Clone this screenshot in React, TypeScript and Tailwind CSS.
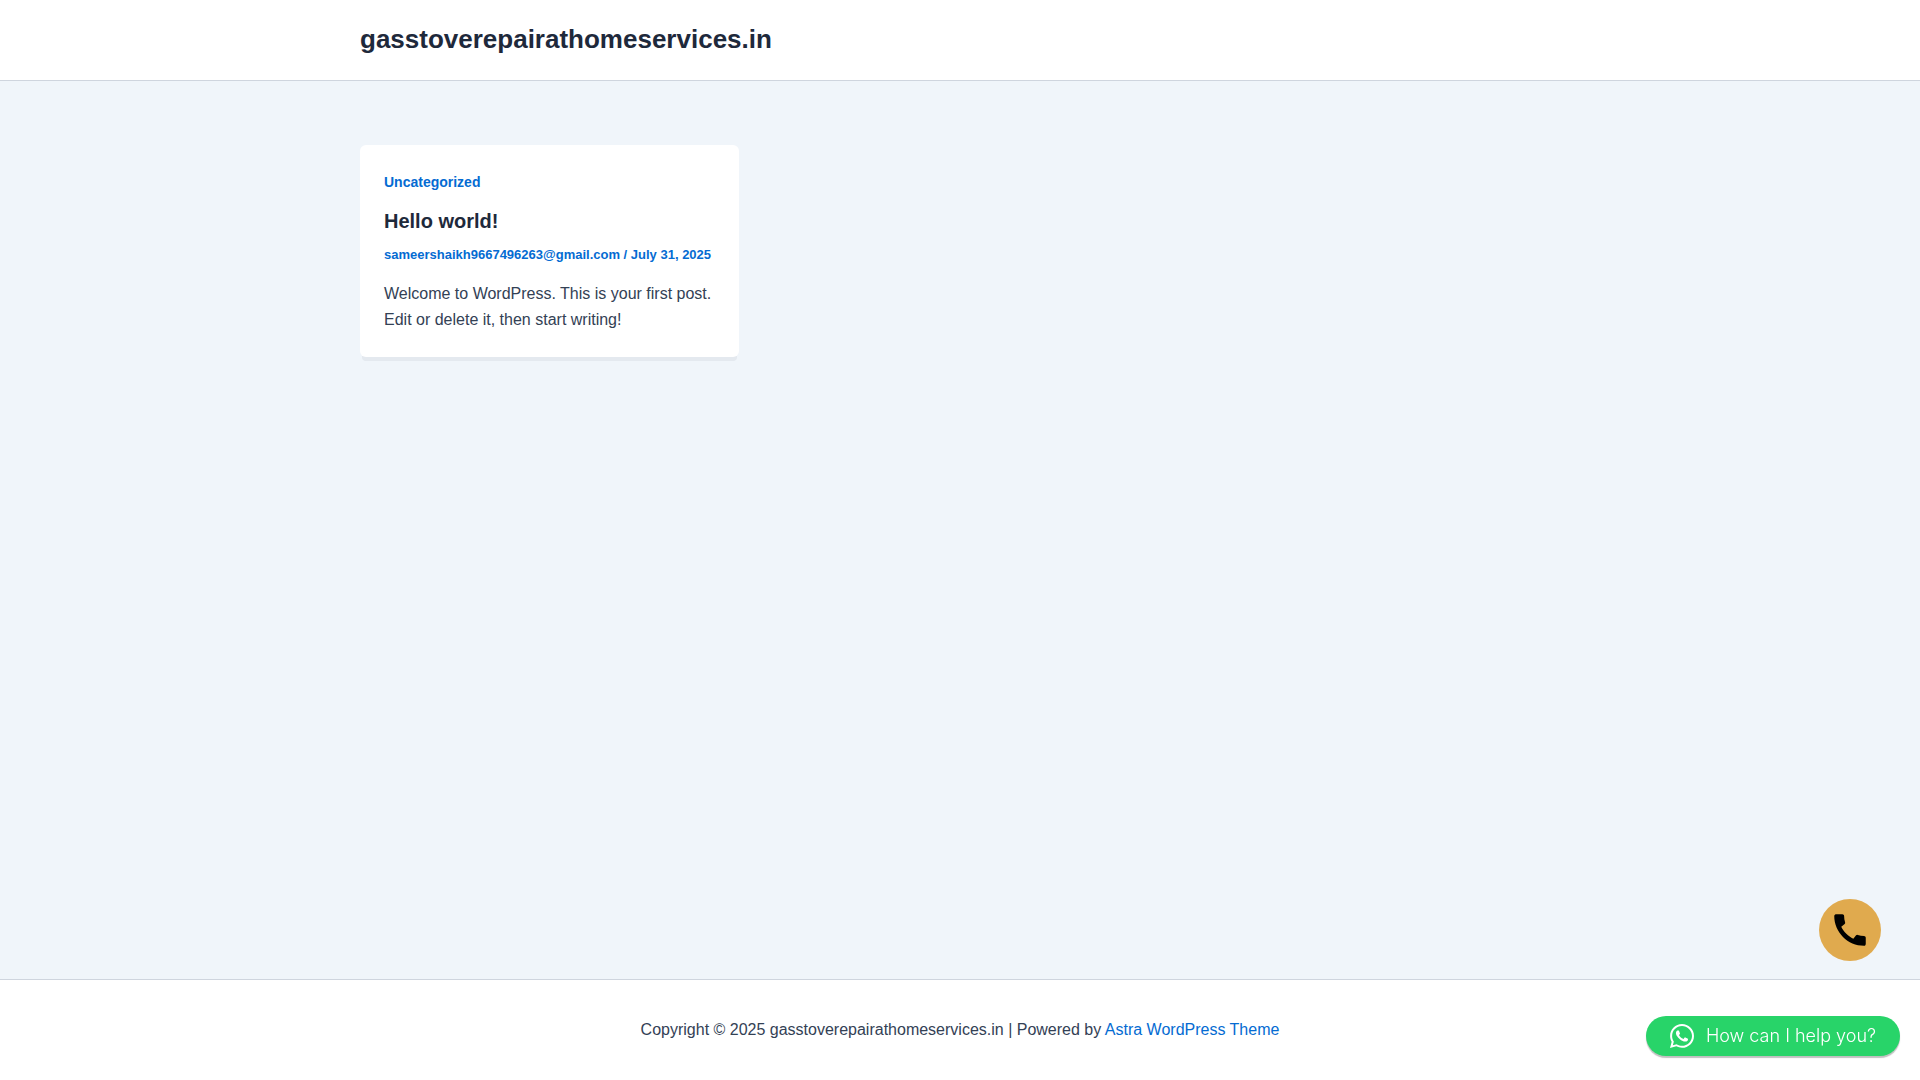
import { FaWhatsapp } from "react-icons/fa";
import { MdCall } from "react-icons/md";

function Header() {
  return (
    <header className="border-b border-[#cfd5de] bg-white">
      <div className="mx-auto flex h-20 max-w-[1200px] items-center pb-0.5">
        <a href="#home" className="text-[26px] leading-8 font-bold text-[#1e293b]">
          gasstoverepairathomeservices.in
        </a>
      </div>
    </header>
  );
}

function PostCard() {
  return (
    <article className="rounded-md bg-white p-6 shadow-[0_6px_0_-2px_rgba(16,24,40,0.05)]">
      <a href="#uncategorized" className="block text-sm leading-[26px] font-bold text-[#046bd2]">
        Uncategorized
      </a>
      <h2 className="mt-3.5 text-xl leading-6 font-bold text-[#1e293b]">
        <a href="#hello-world">Hello world!</a>
      </h2>
      <p className="mt-2.5 text-[13px] leading-6 font-bold text-[#046bd2]">
        <a href="#author">sameershaikh9667496263@gmail.com</a> / July 31, 2025
      </p>
      <p className="mt-3.5 leading-[26px] text-[#334155]">
        Welcome to WordPress. This is your first post. Edit or delete it, then start writing!
      </p>
    </article>
  );
}

export default function App() {
  return (
    <div className="flex min-h-screen flex-col bg-[#f0f5fa] font-['Liberation_Sans',Arial,sans-serif] text-base">
      <Header />
      <main className="mx-auto grid w-full max-w-[1200px] flex-1 grid-cols-3 items-start gap-8 py-16">
        <PostCard />
      </main>
      <footer className="flex h-[101px] items-center justify-center border-t border-[#cfd5de] bg-white text-[#334155]">
        <p className="leading-[26px]">
          Copyright © 2025 gasstoverepairathomeservices.in | Powered by{" "}
          <a href="#astra" className="text-[#046bd2]">
            Astra WordPress Theme
          </a>
        </p>
      </footer>
      <a
        href="tel:+919667496263"
        aria-label="Call"
        className="fixed right-[39px] bottom-[119px] flex size-[62px] items-center justify-center rounded-full bg-[#e0aa4e] text-black"
      >
        <MdCall className="size-[42px]" />
      </a>
      <button
        type="button"
        className="fixed right-5 bottom-6 flex h-10 items-center gap-3 rounded-full bg-[#28d469] px-6 font-['Inter',sans-serif] text-lg font-light text-white shadow-[0_2px_1px_rgba(0,0,0,0.25)]"
      >
        <FaWhatsapp className="h-7 w-6" aria-hidden="true" />
        How can I help you?
      </button>
    </div>
  );
}
